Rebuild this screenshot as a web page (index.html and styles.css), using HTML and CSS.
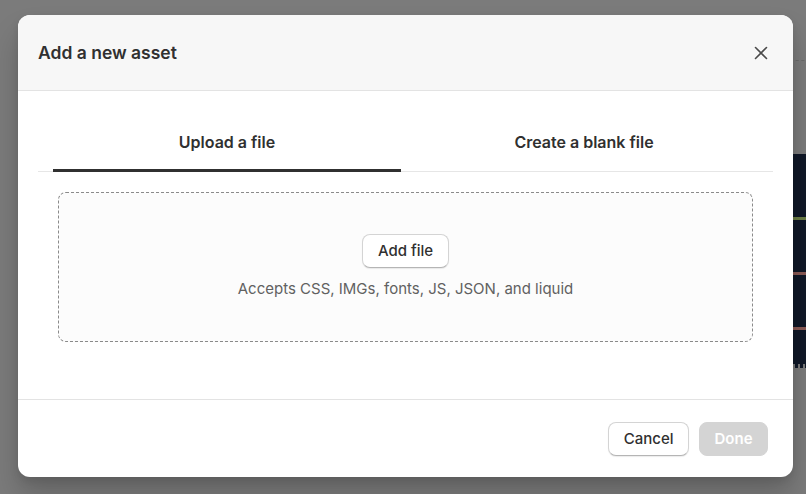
FILE: index.html
```html
<!DOCTYPE html>
<html>
<head>
  <meta charset="UTF-8">
  <title>Add a new asset</title>
  <link rel="stylesheet" href="styles.css">
</head>
<body>
  <div class="page">
    <div class="page-rule"></div>
    <div class="editor">
      <div class="editor-line green"></div>
      <div class="editor-line red"></div>
      <div class="editor-line red short"></div>
      <div class="editor-end"></div>
    </div>
  </div>

  <div class="backdrop">
    <div class="modal">
      <div class="modal-header">
        <h2>Add a new asset</h2>
        <button class="close" aria-label="Close">
          <svg width="20" height="20" viewBox="0 0 20 20">
            <path d="M4.5 4.5l11 11M15.5 4.5l-11 11" stroke="#4a4a4a" stroke-width="1.6" stroke-linecap="round" fill="none"/>
          </svg>
        </button>
      </div>

      <div class="modal-body">
        <div class="tabs">
          <div class="tab active">Upload a file</div>
          <div class="tab">Create a blank file</div>
        </div>

        <div class="dropzone">
          <button class="btn">Add file</button>
          <div class="hint">Accepts CSS, IMGs, fonts, JS, JSON, and liquid</div>
        </div>
      </div>

      <div class="modal-footer">
        <button class="btn">Cancel</button>
        <button class="btn primary" disabled>Done</button>
      </div>
    </div>
  </div>
</body>
</html>
```

FILE: styles.css
```css
* {
  box-sizing: border-box;
}
body {
  margin: 0;
  font-family: Inter, "Noto Sans", sans-serif;
  background: #7b7b7b;
  color: #303030;
  height: 494px;
  overflow: hidden;
}

/* page behind the backdrop */
.page-rule {
  position: absolute;
  top: 60px;
  left: 790px;
  width: 20px;
  border-top: 1px dashed #6a6a6a;
}
.editor {
  position: absolute;
  top: 154px;
  left: 780px;
  width: 40px;
  height: 214px;
  background: #101828;
}
.editor-line {
  position: absolute;
  left: 0;
  width: 40px;
  height: 3px;
}
.editor-line.green {
  top: 63px;
  background: #6b7d45;
}
.editor-line.red {
  top: 118px;
  background: #8a5a55;
}
.editor-line.red.short {
  top: 173px;
}
.editor-end {
  position: absolute;
  left: 0;
  bottom: 0;
  width: 40px;
  height: 4px;
  background: repeating-linear-gradient(90deg, #101828 0 3px, #7b7b7b 3px 5px);
}

.backdrop {
  position: relative;
  padding: 15px 0 0 18px;
}
.modal {
  width: 775px;
  height: 462px;
  background: #fff;
  border-radius: 12px;
  overflow: hidden;
  display: flex;
  flex-direction: column;
  box-shadow: 0 20px 30px rgba(0,0,0,0.18), 0 4px 10px rgba(0,0,0,0.1);
}

.modal-header {
  height: 76px;
  background: #f7f7f7;
  border-bottom: 1px solid #e3e3e3;
  display: flex;
  align-items: center;
  justify-content: space-between;
  padding: 0 22px 0 20px;
}
.modal-header h2 {
  margin: 0;
  font-size: 17.5px;
  font-weight: 600;
  color: #303030;
}
.close {
  background: none;
  border: none;
  padding: 0;
  width: 20px;
  height: 20px;
  cursor: pointer;
}

.modal-body {
  flex: 1;
  padding: 20px 20px 0;
}
.tabs {
  display: grid;
  grid-template-columns: 1fr 1fr;
  gap: 9px;
  padding: 0 15px;
  border-bottom: 1px solid #e6e6e6;
}
.tab {
  height: 61px;
  display: flex;
  align-items: center;
  justify-content: center;
  font-size: 16px;
  font-weight: 600;
  color: #303030;
  border-bottom: 3px solid transparent;
  margin-bottom: -1px;
  padding-top: 3px;
}
.tab.active {
  border-bottom-color: #303030;
}

.dropzone {
  margin: 20px 20px 0;
  height: 150px;
  border: 1px dashed #8a8a8a;
  border-radius: 8px;
  background: #fcfcfc;
  display: flex;
  flex-direction: column;
  align-items: center;
  justify-content: center;
  gap: 11px;
  padding-bottom: 3px;
}
.hint {
  font-size: 15px;
  color: #616161;
}

.btn {
  font-family: inherit;
  font-size: 15px;
  font-weight: 500;
  color: #303030;
  height: 34px;
  padding: 0 14.5px;
  background: #fff;
  border: 1px solid #d4d4d4;
  border-bottom-color: #b5b5b5;
  border-radius: 8px;
  box-shadow: 0 1px 1px rgba(0,0,0,0.08);
  cursor: pointer;
}
.modal-footer {
  height: 78px;
  border-top: 1px solid #e3e3e3;
  display: flex;
  align-items: center;
  justify-content: flex-end;
  gap: 10px;
  padding: 0 25px 0 20px;
}
.btn.primary {
  background: #d4d4d4;
  border-color: #d4d4d4;
  color: #fff;
  font-weight: 600;
  box-shadow: none;
  cursor: default;
}
```
